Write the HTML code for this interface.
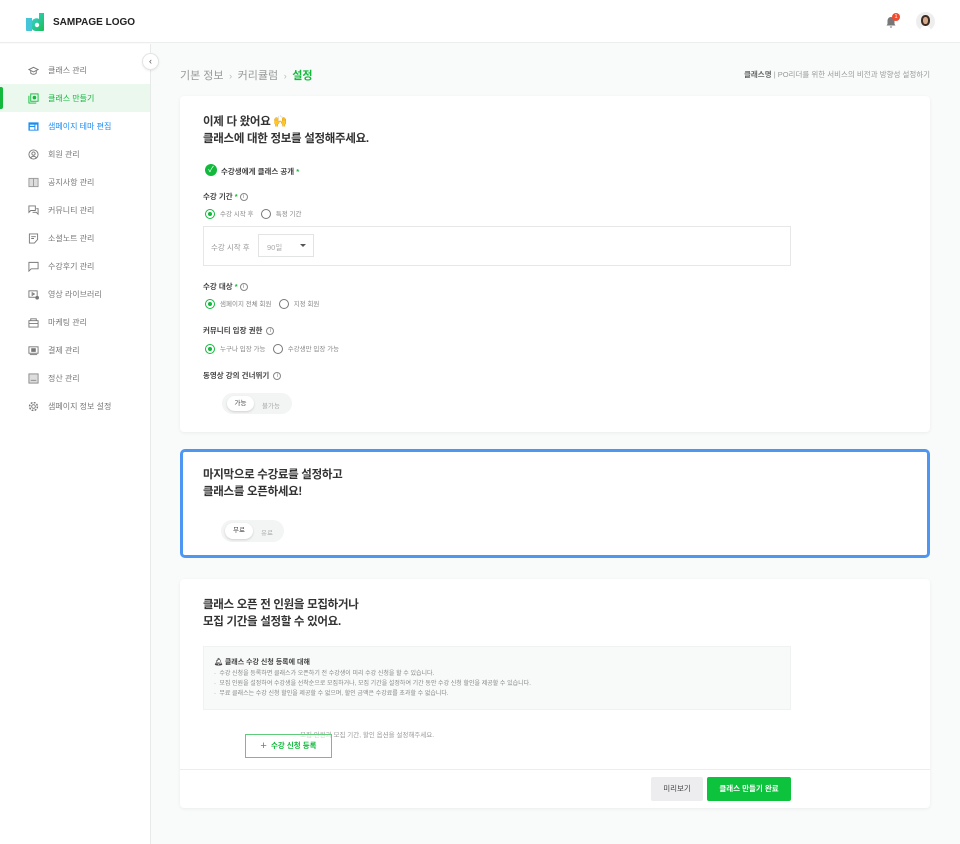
<!DOCTYPE html>
<html><head><meta charset="utf-8"><style>
*{box-sizing:border-box;margin:0;padding:0}
body{width:960px;height:844px;position:relative;background:#f9fafa;font-family:"Liberation Sans","Noto Sans CJK KR",sans-serif;color:#333;overflow:hidden}
.a{position:absolute;white-space:nowrap}
.hdr{left:0;top:0;width:960px;height:43px;background:#fff;border-bottom:1px solid #eceeee}
.side{left:0;top:44px;width:151px;height:800px;background:#fff;border-right:1px solid #e8eaea}
.nav{left:0;width:150px;height:28px;font-size:8px;color:#777;display:flex;align-items:center;padding-left:28px}
.nav svg{width:11px;height:11px;margin-right:9px}
.card{background:#fff;border-radius:4px;box-shadow:0 1px 3px rgba(0,0,0,.06)}
.h{font-size:11.5px;font-weight:bold;color:#333;line-height:17px;letter-spacing:-0.3px}
.lbl{font-size:7.5px;font-weight:bold;color:#444}
.small{font-size:6.5px;color:#888}
.rad{display:inline-block;width:10px;height:10px;border-radius:50%;border:1px solid #777;vertical-align:middle;margin-right:5px;position:relative}
.rad.on{border-color:#12b93c;border-width:1.5px}
.rad.on:after{content:"";position:absolute;left:1.5px;top:1.5px;width:4px;height:4px;border-radius:50%;background:#12b93c}
.i{display:inline-block;width:8px;height:8px;border:0.8px solid #888;border-radius:50%;font-size:6px;line-height:7px;text-align:center;color:#888;font-weight:normal;vertical-align:middle;margin-left:2px}
.g{color:#12b93c}
.tog{background:#f3f4f4;border-radius:11px}
.knob{background:#fff;border-radius:10px;box-shadow:0 1px 2px rgba(0,0,0,.15);font-size:6.5px;color:#444;text-align:center}
</style></head><body>
<div class="a hdr"></div>
<svg class="a" style="left:25px;top:12px" width="20" height="20" viewBox="0 0 20 20"><defs><linearGradient id="lg" x1="0" y1="0" x2="1" y2="1"><stop offset="0" stop-color="#3ad0e0"/><stop offset="1" stop-color="#17c04f"/></linearGradient></defs><path d="M1 6h6v13H2a1 1 0 0 1-1-1z" fill="#45c6d8"/><path d="M14 1h5v17a1 1 0 0 1-1 1H11a5 5 0 0 1-4-2V9a5 5 0 0 1 7-2z" fill="url(#lg)"/><circle cx="12" cy="13" r="2.2" fill="#fff"/></svg>
<div class="a" style="left:53px;top:17px;font-size:10px;font-weight:bold;color:#222">SAMPAGE LOGO</div>
<svg class="a" style="left:885px;top:16px" width="12" height="12" viewBox="0 0 12 12"><path d="M6 1a3.5 3.5 0 0 0-3.5 3.5V8L1.5 9.5h9L9.5 8V4.5A3.5 3.5 0 0 0 6 1zM4.8 10.5a1.2 1.2 0 0 0 2.4 0z" fill="#777"/></svg>
<div class="a" style="left:892px;top:13px;width:8px;height:8px;border-radius:50%;background:#f04b2f;color:#fff;font-size:5.5px;text-align:center;line-height:8px">1</div>
<div class="a" style="left:916px;top:12px;width:19px;height:19px;border-radius:50%;background:#eee;overflow:hidden"><div style="position:absolute;left:5px;top:3px;width:9px;height:11px;border-radius:45%;background:#3a2a22"></div><div style="position:absolute;left:7px;top:5px;width:5px;height:7px;border-radius:45%;background:#d9a88a"></div><div style="position:absolute;left:4px;top:14px;width:11px;height:6px;border-radius:5px 5px 0 0;background:#fff"></div></div>

<div class="a side"></div>
<div class="a" style="left:0;top:84px;width:150px;height:28px;background:#ebf8ee"></div>
<div class="a" style="left:0;top:87px;width:3px;height:22px;background:#12b93c;border-radius:0 2px 2px 0"></div>
<div class="a nav" style="top:56px"><svg viewBox="0 0 12 12" fill="none" stroke="#777"><path d="M1 5l5-2.5L11 5 6 7.5z M3 6v3c2 1.5 4 1.5 6 0V6"/></svg>클래스 관리</div>
<div class="a nav" style="top:84px;color:#12b93c"><svg viewBox="0 0 12 12" fill="none" stroke="#12b93c"><rect x="3" y="1" width="8" height="8"/><path d="M1 3v8h8"/><circle cx="7" cy="5" r="1.5" fill="#12b93c"/></svg>클래스 만들기</div>
<div class="a nav" style="top:112px;color:#1a8cf0"><svg viewBox="0 0 12 12"><rect x="0.5" y="1.5" width="11" height="9" fill="#1a8cf0"/><rect x="2" y="4" width="5" height="1.3" fill="#fff"/><rect x="2" y="6.5" width="5" height="3" fill="#fff"/><rect x="8" y="4" width="2" height="5.5" fill="#fff"/></svg>샘페이지 테마 편집</div>
<div class="a nav" style="top:140px"><svg viewBox="0 0 12 12" fill="none" stroke="#777"><circle cx="6" cy="6" r="5"/><circle cx="6" cy="5" r="1.8"/><path d="M3 9.5c1.5-2 4.5-2 6 0"/></svg>회원 관리</div>
<div class="a nav" style="top:168px"><svg viewBox="0 0 12 12" fill="none" stroke="#999"><rect x="1" y="1.5" width="10" height="9" fill="#ddd"/><path d="M6 1.5v9"/></svg>공지사항 관리</div>
<div class="a nav" style="top:196px"><svg viewBox="0 0 12 12" fill="none" stroke="#777"><path d="M1 1h7v5H3L1 8z M5 8h4l2 2V4H9"/></svg>커뮤니티 관리</div>
<div class="a nav" style="top:224px"><svg viewBox="0 0 12 12" fill="none" stroke="#777"><path d="M1.5 1h9v6l-3.5 4h-5.5z M3.5 4h5 M3.5 6h3"/></svg>소셜노트 관리</div>
<div class="a nav" style="top:252px"><svg viewBox="0 0 12 12" fill="none" stroke="#777"><path d="M1 1.5h10v7H3.5L1 11z"/></svg>수강후기 관리</div>
<div class="a nav" style="top:280px"><svg viewBox="0 0 12 12" fill="none" stroke="#777"><rect x="1" y="2" width="9" height="7"/><path d="M4.5 4v3l2.5-1.5z"/><circle cx="10" cy="9.5" r="1.5" fill="#777"/></svg>영상 라이브러리</div>
<div class="a nav" style="top:308px"><svg viewBox="0 0 12 12" fill="none" stroke="#777"><rect x="1" y="4" width="10" height="7"/><path d="M3 4V2h6v2 M1 7h10"/></svg>마케팅 관리</div>
<div class="a nav" style="top:336px"><svg viewBox="0 0 12 12" fill="none" stroke="#777"><rect x="1" y="2" width="10" height="7"/><rect x="4" y="4" width="4" height="3" fill="#777"/><path d="M2 10.5h8"/></svg>결제 관리</div>
<div class="a nav" style="top:364px"><svg viewBox="0 0 12 12" fill="none" stroke="#888"><rect x="1" y="1" width="10" height="10" fill="#ddd"/><path d="M3 8h6"/></svg>정산 관리</div>
<div class="a nav" style="top:392px"><svg viewBox="0 0 12 12" fill="none" stroke="#777"><circle cx="6" cy="6" r="2"/><circle cx="6" cy="6" r="4.3" stroke-dasharray="2 1.4" stroke-width="1.6"/></svg>샘페이지 정보 설정</div>
<div class="a" style="left:142px;top:53px;width:17px;height:17px;border-radius:50%;background:#fff;border:1px solid #e3e5e5;box-shadow:0 1px 2px rgba(0,0,0,.08);font-size:9px;color:#555;text-align:center;line-height:14px">‹</div>

<div class="a" style="left:180px;top:67px;font-size:11px;color:#999">기본 정보 <span style="color:#bbb;font-size:9px">&nbsp;›&nbsp;</span> 커리큘럼 <span style="color:#bbb;font-size:9px">&nbsp;›&nbsp;</span> <b class="g">설정</b></div>
<div class="a" style="left:744px;top:69px;font-size:7.5px;color:#999"><b style="color:#666">클래스명</b> | PO리더를 위한 서비스의 비전과 방향성 설정하기</div>

<div class="a card" style="left:180px;top:96px;width:750px;height:336px"></div>
<div class="a h" style="left:203px;top:114px">이제 다 왔어요 🙌<br>클래스에 대한 정보를 설정해주세요.</div>
<div class="a" style="left:205px;top:164px;width:12px;height:12px;border-radius:50%;background:#12b93c;color:#fff;font-size:8px;text-align:center;line-height:12px">✓</div>
<div class="a lbl" style="left:221px;top:166px">수강생에게 클래스 공개 <span class="g">*</span></div>
<div class="a lbl" style="left:203px;top:191px">수강 기간 <span class="g">*</span><span class="i">i</span></div>
<div class="a small" style="left:205px;top:208px"><span class="rad on"></span>수강 시작 후 &nbsp;&nbsp;&nbsp;<span class="rad"></span>특정 기간</div>
<div class="a" style="left:203px;top:226px;width:588px;height:40px;border:1px solid #e6e8e8"></div>
<div class="a" style="left:211px;top:242px;font-size:7.5px;color:#999">수강 시작 후</div>
<div class="a" style="left:258px;top:234px;width:56px;height:23px;border:1px solid #e2e4e4;font-size:7.5px;color:#aaa;padding:7px 0 0 8px">90일<span style="position:absolute;right:7px;top:9px;border:3px solid transparent;border-top:3px solid #555"></span></div>
<div class="a lbl" style="left:203px;top:281px">수강 대상 <span class="g">*</span><span class="i">i</span></div>
<div class="a small" style="left:205px;top:298px"><span class="rad on"></span>샘페이지 전체 회원 &nbsp;&nbsp;&nbsp;<span class="rad"></span>지정 회원</div>
<div class="a lbl" style="left:203px;top:325px">커뮤니티 입장 권한 <span class="i">i</span></div>
<div class="a small" style="left:205px;top:343px"><span class="rad on"></span>누구나 입장 가능 &nbsp;&nbsp;&nbsp;<span class="rad"></span>수강생만 입장 가능</div>
<div class="a lbl" style="left:203px;top:370px">동영상 강의 건너뛰기 <span class="i">i</span></div>
<div class="a tog" style="left:222px;top:393px;width:70px;height:21px"></div>
<div class="a knob" style="left:227px;top:396px;width:27px;height:15px;line-height:15px">가능</div>
<div class="a" style="left:262px;top:400px;font-size:6.5px;color:#aaa">불가능</div>

<div class="a" style="left:180px;top:449px;width:750px;height:109px;background:#fff;border:3px solid #4d97f3;border-radius:5px"></div>
<div class="a h" style="left:203px;top:467px">마지막으로 수강료를 설정하고<br>클래스를 오픈하세요!</div>
<div class="a tog" style="left:221px;top:520px;width:63px;height:22px"></div>
<div class="a knob" style="left:225px;top:523px;width:28px;height:16px;line-height:16px">무료</div>
<div class="a" style="left:261px;top:527px;font-size:6.5px;color:#aaa">유료</div>

<div class="a card" style="left:180px;top:579px;width:750px;height:229px"></div>
<div class="a h" style="left:203px;top:597px">클래스 오픈 전 인원을 모집하거나<br>모집 기간을 설정할 수 있어요.</div>
<div class="a" style="left:203px;top:646px;width:588px;height:64px;background:#f8f9f9;border:1px solid #f0f1f1"></div>
<div class="a" style="left:214px;top:657px;font-size:7px;font-weight:bold;color:#444">🔔︎ 클래스 수강 신청 등록에 대해</div>
<div class="a" style="left:214px;top:669px;font-size:6px;color:#888;line-height:10px">·&nbsp; 수강 신청을 등록하면 클래스가 오픈하기 전 수강생이 미리 수강 신청을 할 수 있습니다.<br>·&nbsp; 모집 인원을 설정하여 수강생을 선착순으로 모집하거나, 모집 기간을 설정하여 기간 동안 수강 신청 할인을 제공할 수 있습니다.<br>·&nbsp; 무료 클래스는 수강 신청 할인을 제공할 수 없으며, 할인 금액은 수강료를 초과할 수 없습니다.</div>
<div class="a" style="left:300px;top:729px;font-size:6.5px;color:#999">모집 인원과 모집 기간, 할인 옵션을 설정해주세요.</div>
<div class="a" style="left:245px;top:734px;width:87px;height:24px;border:1px solid #5fcc7a;background:rgba(255,255,255,.6);font-size:7.5px;font-weight:bold;color:#12b93c;text-align:center;line-height:22px"><span style="font-size:11px;font-weight:normal;vertical-align:-1px">+</span>&nbsp; 수강 신청 등록</div>
<div class="a" style="left:180px;top:769px;width:750px;height:1px;background:#eceeee"></div>
<div class="a" style="left:651px;top:777px;width:52px;height:24px;background:#ededf0;border-radius:2px;font-size:7.5px;color:#444;text-align:center;line-height:24px">미리보기</div>
<div class="a" style="left:707px;top:777px;width:84px;height:24px;background:#0dc23c;border-radius:2px;font-size:7.5px;font-weight:bold;color:#fff;text-align:center;line-height:24px">클래스 만들기 완료</div>
</body></html>
